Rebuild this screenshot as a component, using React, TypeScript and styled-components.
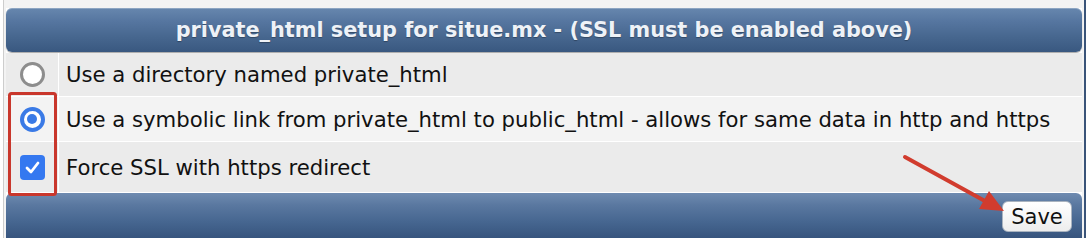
import React from "react";
import styled, { createGlobalStyle } from "styled-components";

const Global = createGlobalStyle`
  html, body { margin: 0; padding: 0; background: #ffffff; }
  body { width: 1090px; height: 238px; overflow: hidden; font-family: "DejaVu Sans", Verdana, sans-serif; }
`;

const Page = styled.div`
  position: relative;
  width: 1090px;
  height: 238px;
  padding-left: 3px;
  box-sizing: border-box;
  background: #ffffff;
`;

const Frame = styled.div`
  width: 1083px;
  height: 238px;
  box-sizing: border-box;
  border-left: 1px solid #cdcdcd;
  border-right: 2px solid #3a5479;
  padding: 8px 2px 0 2px;
  background: #f3f3f3;
`;

const Panel = styled.div`
  width: 1076px;
  display: flex;
  flex-direction: column;
  gap: 1px;
  background: #ffffff;
`;

const Header = styled.div`
  height: 44px;
  border-radius: 6px;
  background: linear-gradient(#6787ae 0%, #5676a0 30%, #47678f 65%, #395880 100%);
  box-shadow: inset 0 1px 0 rgba(255, 255, 255, 0.25), 0 1px 1px rgba(0, 0, 0, 0.35);
  display: flex;
  align-items: center;
  justify-content: center;
  color: #eef2f7;
  font-weight: bold;
  font-size: 20.8px;
  text-shadow: 0 1px 1px rgba(0, 0, 0, 0.3);
`;

const Row = styled.div<{ $h: number; $bg: string }>`
  height: ${(p) => p.$h}px;
  display: flex;
  gap: 1px;
  background: #ffffff;
  & > * { background: ${(p) => p.$bg}; }
`;

const IconCell = styled.div`
  width: 52px;
  flex: none;
  display: flex;
  align-items: center;
  justify-content: center;
`;

const TextCell = styled.div`
  flex: 1;
  display: flex;
  align-items: center;
  padding-left: 7px;
  font-size: 21.2px;
  color: #111111;
  white-space: nowrap;
`;

const RadioOff = styled.span`
  width: 25px;
  height: 25px;
  box-sizing: border-box;
  border-radius: 50%;
  border: 3px solid #8d8d8d;
  background: #ffffff;
`;

const RadioOn = styled.span`
  width: 25px;
  height: 25px;
  box-sizing: border-box;
  border-radius: 50%;
  border: 4px solid #3a7ae6;
  background: #ffffff;
  display: flex;
  align-items: center;
  justify-content: center;
  &::after {
    content: "";
    width: 10px;
    height: 10px;
    border-radius: 50%;
    background: #3a7ae6;
  }
`;

const Check = styled.span`
  width: 25px;
  height: 25px;
  border-radius: 4px;
  background: #3478f0;
  display: flex;
  align-items: center;
  justify-content: center;
`;

const Footer = styled.div`
  height: 48px;
  border-radius: 6px 6px 0 0;
  background: linear-gradient(#6f8bb0 0%, #5a78a0 25%, #466690 60%, #34517a 100%);
  display: flex;
  justify-content: flex-end;
  align-items: flex-start;
  padding: 8px 10px 0 0;
  box-sizing: border-box;
`;

const SaveButton = styled.button`
  width: 70px;
  height: 31px;
  border-radius: 6px;
  border: 1px solid #a9b3bf;
  background: linear-gradient(#ffffff, #ededed);
  font-family: "DejaVu Sans", Verdana, sans-serif;
  font-size: 21px;
  color: #111111;
  padding: 0;
  display: flex;
  align-items: center;
  justify-content: center;
`;

const Overlay = styled.svg`
  position: absolute;
  left: 0;
  top: 0;
  pointer-events: none;
`;

export default function App() {
  return (
    <>
      <Global />
      <Page>
        <Frame>
          <Panel>
            <Header>private_html setup for situe.mx - (SSL must be enabled above)</Header>
            <Row $h={43} $bg="#ebebeb">
              <IconCell>
                <RadioOff />
              </IconCell>
              <TextCell>Use a directory named private_html</TextCell>
            </Row>
            <Row $h={44} $bg="#f3f3f3">
              <IconCell>
                <RadioOn />
              </IconCell>
              <TextCell>
                Use a symbolic link from private_html to public_html - allows for same data in http and https
              </TextCell>
            </Row>
            <Row $h={50} $bg="#ebebeb">
              <IconCell>
                <Check>
                  <svg width="17" height="17" viewBox="0 0 17 17">
                    <path d="M3 9 L7 13 L14 4" fill="none" stroke="#ffffff" strokeWidth="2.8" strokeLinecap="round" strokeLinejoin="round" />
                  </svg>
                </Check>
              </IconCell>
              <TextCell>Force SSL with https redirect</TextCell>
            </Row>
            <Footer>
              <SaveButton>Save</SaveButton>
            </Footer>
          </Panel>
        </Frame>
        <Overlay width="1090" height="238" viewBox="0 0 1090 238">
          <rect x="9.5" y="93.5" width="46" height="101" rx="2" fill="none" stroke="#c9372c" strokeWidth="3" />
          <line x1="905" y1="157" x2="984" y2="200.5" stroke="#d13c2e" strokeWidth="4" strokeLinecap="round" />
          <polygon points="1004,211 979,209 989,191" fill="#d13c2e" />
        </Overlay>
      </Page>
    </>
  );
}
